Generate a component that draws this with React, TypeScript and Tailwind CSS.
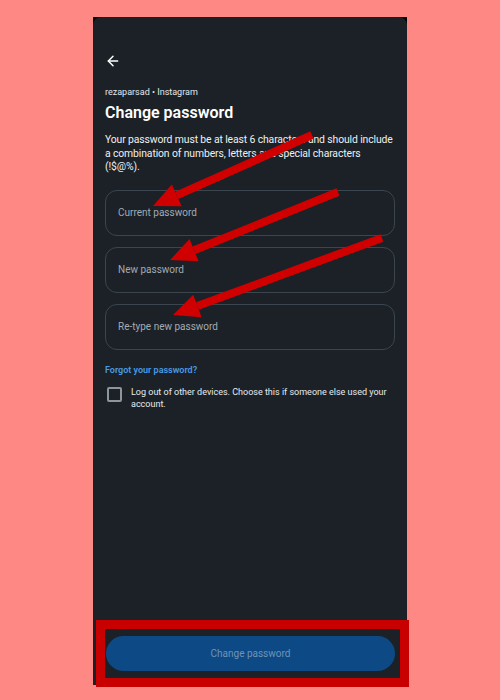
import { ArrowLeft } from 'lucide-react';

const FIELDS = ['Current password', 'New password', 'Re-type new password'];

// red annotation arrows drawn over the screenshot: tail -> tip
const ARROWS = [
  { x1: 312, y1: 135, x2: 153, y2: 206 },
  { x1: 338, y1: 192, x2: 170, y2: 260 },
  { x1: 382, y1: 238, x2: 173, y2: 315 },
];

function Arrow({ x1, y1, x2, y2 }: { x1: number; y1: number; x2: number; y2: number }) {
  const angle = Math.atan2(y2 - y1, x2 - x1);
  const len = 26;
  const half = 12;
  const bx = x2 - Math.cos(angle) * len;
  const by = y2 - Math.sin(angle) * len;
  const px = -Math.sin(angle) * half;
  const py = Math.cos(angle) * half;
  return (
    <g>
      <line x1={x1} y1={y1} x2={bx} y2={by} stroke="#d10000" strokeWidth={8} />
      <polygon points={`${x2},${y2} ${bx + px},${by + py} ${bx - px},${by - py}`} fill="#d10000" />
    </g>
  );
}

export default function App() {
  return (
    <div className="relative w-[500px] h-[700px] bg-[#fe8984] pt-[17px] pl-[93px] overflow-hidden" style={{ fontFamily: 'Roboto, "Noto Sans", sans-serif' }}>
      <div className="w-[314px] h-[668px] bg-black">
        <div className="flex flex-col h-full bg-[#1b2127] rounded-t-[8px] text-white">
          <div className="px-3 pt-[36px]">
            <ArrowLeft className="w-[16px] h-[16px] text-white" strokeWidth={2.2} />
          </div>

          <div className="px-3 pt-[17px]">
            <p className="text-[9px] leading-[12px] text-[#e5e7ea]">rezaparsad • Instagram</p>
            <h1 className="mt-[5px] text-[16px] leading-[20px] font-semibold">Change password</h1>
            <p className="mt-[10px] text-[10.4px] leading-[13.5px] tracking-[-0.12px] whitespace-nowrap text-[#eef0f2]">
              Your password must be at least 6 characters and should include
              <br />
              a combination of numbers, letters and special characters
              <br />
              (!$@%).
            </p>

            <div className="mt-[16px] flex flex-col gap-[11px]">
              {FIELDS.map((f) => (
                <div key={f} className="h-[46px] rounded-[12px] border border-[#3b454e] flex items-center px-3">
                  <span className="text-[10px] text-[#a3abb3]">{f}</span>
                </div>
              ))}
            </div>

            <p className="mt-[14px] text-[9px] font-semibold text-[#4a9be6]">Forgot your password?</p>

            <div className="mt-[9px] flex items-start gap-[9px] pl-[2px]">
              <div className="w-[15px] h-[15px] shrink-0 rounded-[2px] border-2 border-[#8e969d] mt-[1px]" />
              <p className="text-[9px] leading-[12px] text-[#e8eaed]">
                Log out of other devices. Choose this if someone else used your account.
              </p>
            </div>
          </div>

          <div className="mt-auto ml-[3px] -mr-[2px] -mb-[2px] h-[67px] border-[9px] border-[#c80000] flex items-center pl-[1px] pr-[5px]">
            <button className="w-full h-[35px] rounded-full bg-[#0d4a85] text-[#6f93b6] text-[10px]">
              Change password
            </button>
          </div>
        </div>
      </div>

      <svg className="absolute inset-0 pointer-events-none" width={500} height={700}>
        {ARROWS.map((a, i) => (
          <Arrow key={i} {...a} />
        ))}
      </svg>
    </div>
  );
}
